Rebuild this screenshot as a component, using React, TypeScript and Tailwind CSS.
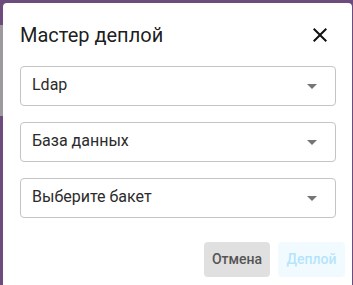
const fields = ["Ldap", "База данных", "Выберите бакет"];

function ArrowDrop() {
  return (
    <svg width="24" height="24" viewBox="0 0 24 24" className="shrink-0">
      <path d="M7 10l5 5 5-5z" fill="#757575" />
    </svg>
  );
}

function CloseIcon() {
  return (
    <svg width="24" height="24" viewBox="0 0 24 24">
      <path
        d="M19 6.41 17.59 5 12 10.59 6.41 5 5 6.41 10.59 12 5 17.59 6.41 19 12 13.41 17.59 19 19 17.59 13.41 12z"
        fill="#111"
      />
    </svg>
  );
}

export default function App() {
  return (
    <div className="relative w-[353px] h-[285px] overflow-hidden bg-[#6d4b7c] font-['Roboto',sans-serif]">
      {/* backdrop behind the dialog */}
      <div className="absolute left-0 top-0 w-[3px] h-full flex flex-col">
        <div className="h-[25px] bg-[#6d4b7c]" />
        <div className="h-[91px] bg-[#9c9a9d]" />
        <div className="flex-1 bg-[#6d4b7c]" />
      </div>

      <div className="relative ml-[3px] mt-[3px] w-[349px] h-[282px] bg-white rounded-t-[4px] flex flex-col">
        {/* header */}
        <div className="flex items-center justify-between pl-[17px] pr-[20px] pt-[16px] h-[48px]">
          <h2 className="text-[20px] leading-[32px] font-normal text-black/90">
            Мастер деплой
          </h2>
          <CloseIcon />
        </div>

        {/* fields */}
        <div className="flex flex-col gap-[16px] pl-[17px] pt-[15px]">
          {fields.map((f) => (
            <div
              key={f}
              className="w-[316px] h-[40px] border border-[#c4c4c4] rounded-[4px] flex items-center justify-between pl-[11px] pr-[11px]"
            >
              <span className="text-[16px] text-[#2b2b2b] pb-[2px]">{f}</span>
              <ArrowDrop />
            </div>
          ))}
        </div>

        {/* actions */}
        <div className="flex justify-end gap-[8px] pr-[7px] pt-[24px]">
          <button className="w-[66px] h-[35px] rounded-[4px] bg-[#e0e0e0] text-[14px] font-medium text-[#555555] flex items-center justify-center">
            Отмена
          </button>
          <button
            disabled
            className="w-[67px] h-[35px] rounded-[4px] bg-[#f1fbff] text-[14px] font-medium text-[#b6e4fb] flex items-center justify-center"
          >
            Деплой
          </button>
        </div>
      </div>
    </div>
  );
}
